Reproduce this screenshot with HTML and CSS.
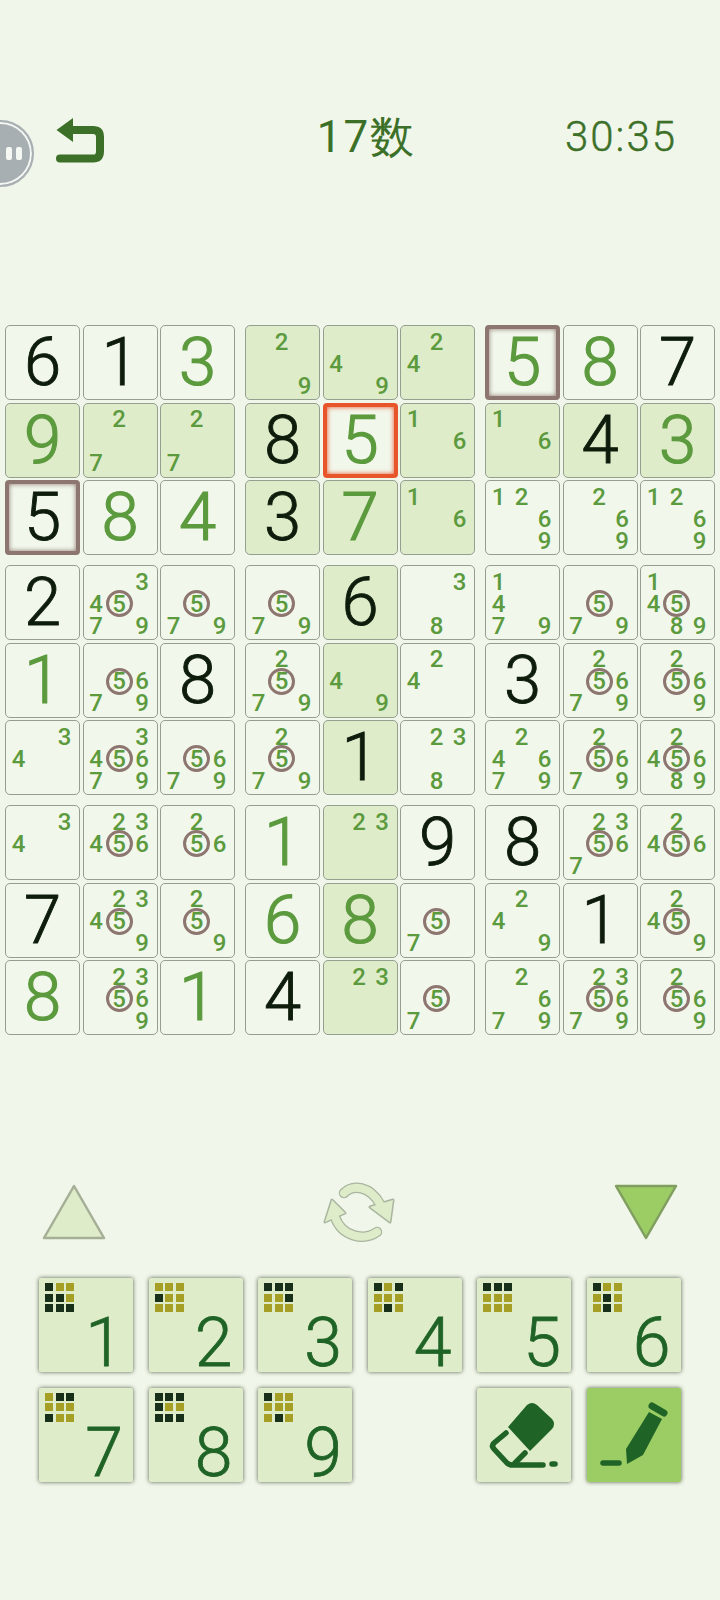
FILE: index.html
```html
<!DOCTYPE html>
<html>
    <head>
        <meta charset="utf-8" />
        <title>17数</title>
        <link rel="stylesheet" href="styles.css">
    </head>

    <body>
        <div class="pause-float"><span></span><span></span></div>

        <header class="top-bar">
            <svg class="back-icon" viewBox="0 0 48 45">
                <polygon points="0.5,12 17,0 17,24" />
                <path d="M14 12 H37 Q44 12 44 19 V33 Q44 40.5 37 40.5 H4" />
            </svg>
            <div class="title">17数</div>
            <div class="timer">30:35</div>
        </header>

        <main class="board">
            <div class="box">
                <div class="cell fix">6</div>
                <div class="cell fix">1</div>
                <div class="cell num">3</div>
                <div class="cell num tint">9</div>
                <div class="cell notes tint"><span class="n2">2</span><span class="n7">7</span></div>
                <div class="cell notes tint"><span class="n2">2</span><span class="n7">7</span></div>
                <div class="cell fix hold">5</div>
                <div class="cell num">8</div>
                <div class="cell num">4</div>
            </div>
            <div class="box">
                <div class="cell notes tint"><span class="n2">2</span><span class="n9">9</span></div>
                <div class="cell notes tint"><span class="n4">4</span><span class="n9">9</span></div>
                <div class="cell notes tint"><span class="n2">2</span><span class="n4">4</span></div>
                <div class="cell fix tint">8</div>
                <div class="cell num sel">5</div>
                <div class="cell notes tint"><span class="n1">1</span><span class="n6">6</span></div>
                <div class="cell fix tint">3</div>
                <div class="cell num tint">7</div>
                <div class="cell notes tint"><span class="n1">1</span><span class="n6">6</span></div>
            </div>
            <div class="box">
                <div class="cell num hold">5</div>
                <div class="cell num">8</div>
                <div class="cell fix">7</div>
                <div class="cell notes tint"><span class="n1">1</span><span class="n6">6</span></div>
                <div class="cell fix tint">4</div>
                <div class="cell num tint">3</div>
                <div class="cell notes"><span class="n1">1</span><span class="n2">2</span><span class="n6">6</span><span class="n9">9</span></div>
                <div class="cell notes"><span class="n2">2</span><span class="n6">6</span><span class="n9">9</span></div>
                <div class="cell notes"><span class="n1">1</span><span class="n2">2</span><span class="n6">6</span><span class="n9">9</span></div>
            </div>

            <div class="box">
                <div class="cell fix">2</div>
                <div class="cell notes"><span class="n3">3</span><span class="n4">4</span><span class="n5 pin">5</span><span class="n7">7</span><span class="n9">9</span></div>
                <div class="cell notes"><span class="n5 pin">5</span><span class="n7">7</span><span class="n9">9</span></div>
                <div class="cell num">1</div>
                <div class="cell notes"><span class="n5 pin">5</span><span class="n6">6</span><span class="n7">7</span><span class="n9">9</span></div>
                <div class="cell fix">8</div>
                <div class="cell notes"><span class="n3">3</span><span class="n4">4</span></div>
                <div class="cell notes"><span class="n3">3</span><span class="n4">4</span><span class="n5 pin">5</span><span class="n6">6</span><span class="n7">7</span><span class="n9">9</span></div>
                <div class="cell notes"><span class="n5 pin">5</span><span class="n6">6</span><span class="n7">7</span><span class="n9">9</span></div>
            </div>
            <div class="box">
                <div class="cell notes"><span class="n5 pin">5</span><span class="n7">7</span><span class="n9">9</span></div>
                <div class="cell fix tint">6</div>
                <div class="cell notes"><span class="n3">3</span><span class="n8">8</span></div>
                <div class="cell notes"><span class="n2">2</span><span class="n5 pin">5</span><span class="n7">7</span><span class="n9">9</span></div>
                <div class="cell notes tint"><span class="n4">4</span><span class="n9">9</span></div>
                <div class="cell notes"><span class="n2">2</span><span class="n4">4</span></div>
                <div class="cell notes"><span class="n2">2</span><span class="n5 pin">5</span><span class="n7">7</span><span class="n9">9</span></div>
                <div class="cell fix tint">1</div>
                <div class="cell notes"><span class="n2">2</span><span class="n3">3</span><span class="n8">8</span></div>
            </div>
            <div class="box">
                <div class="cell notes"><span class="n1">1</span><span class="n4">4</span><span class="n7">7</span><span class="n9">9</span></div>
                <div class="cell notes"><span class="n5 pin">5</span><span class="n7">7</span><span class="n9">9</span></div>
                <div class="cell notes"><span class="n1">1</span><span class="n4">4</span><span class="n5 pin">5</span><span class="n8">8</span><span class="n9">9</span></div>
                <div class="cell fix">3</div>
                <div class="cell notes"><span class="n2">2</span><span class="n5 pin">5</span><span class="n6">6</span><span class="n7">7</span><span class="n9">9</span></div>
                <div class="cell notes"><span class="n2">2</span><span class="n5 pin">5</span><span class="n6">6</span><span class="n9">9</span></div>
                <div class="cell notes"><span class="n2">2</span><span class="n4">4</span><span class="n6">6</span><span class="n7">7</span><span class="n9">9</span></div>
                <div class="cell notes"><span class="n2">2</span><span class="n5 pin">5</span><span class="n6">6</span><span class="n7">7</span><span class="n9">9</span></div>
                <div class="cell notes"><span class="n2">2</span><span class="n4">4</span><span class="n5 pin">5</span><span class="n6">6</span><span class="n8">8</span><span class="n9">9</span></div>
            </div>

            <div class="box">
                <div class="cell notes"><span class="n3">3</span><span class="n4">4</span></div>
                <div class="cell notes"><span class="n2">2</span><span class="n3">3</span><span class="n4">4</span><span class="n5 pin">5</span><span class="n6">6</span></div>
                <div class="cell notes"><span class="n2">2</span><span class="n5 pin">5</span><span class="n6">6</span></div>
                <div class="cell fix">7</div>
                <div class="cell notes"><span class="n2">2</span><span class="n3">3</span><span class="n4">4</span><span class="n5 pin">5</span><span class="n9">9</span></div>
                <div class="cell notes"><span class="n2">2</span><span class="n5 pin">5</span><span class="n9">9</span></div>
                <div class="cell num">8</div>
                <div class="cell notes"><span class="n2">2</span><span class="n3">3</span><span class="n5 pin">5</span><span class="n6">6</span><span class="n9">9</span></div>
                <div class="cell num">1</div>
            </div>
            <div class="box">
                <div class="cell num">1</div>
                <div class="cell notes tint"><span class="n2">2</span><span class="n3">3</span></div>
                <div class="cell fix">9</div>
                <div class="cell num">6</div>
                <div class="cell num tint">8</div>
                <div class="cell notes"><span class="n5 pin">5</span><span class="n7">7</span></div>
                <div class="cell fix">4</div>
                <div class="cell notes tint"><span class="n2">2</span><span class="n3">3</span></div>
                <div class="cell notes"><span class="n5 pin">5</span><span class="n7">7</span></div>
            </div>
            <div class="box">
                <div class="cell fix">8</div>
                <div class="cell notes"><span class="n2">2</span><span class="n3">3</span><span class="n5 pin">5</span><span class="n6">6</span><span class="n7">7</span></div>
                <div class="cell notes"><span class="n2">2</span><span class="n4">4</span><span class="n5 pin">5</span><span class="n6">6</span></div>
                <div class="cell notes"><span class="n2">2</span><span class="n4">4</span><span class="n9">9</span></div>
                <div class="cell fix">1</div>
                <div class="cell notes"><span class="n2">2</span><span class="n4">4</span><span class="n5 pin">5</span><span class="n9">9</span></div>
                <div class="cell notes"><span class="n2">2</span><span class="n6">6</span><span class="n7">7</span><span class="n9">9</span></div>
                <div class="cell notes"><span class="n2">2</span><span class="n3">3</span><span class="n5 pin">5</span><span class="n6">6</span><span class="n7">7</span><span class="n9">9</span></div>
                <div class="cell notes"><span class="n2">2</span><span class="n5 pin">5</span><span class="n6">6</span><span class="n9">9</span></div>
            </div>
        </main>

        <section class="controls">
            <svg class="tri" viewBox="0 0 64 58">
                <polygon class="tri-up" points="32,3 62,55 2,55" />
            </svg>
            <svg class="sync" viewBox="0 0 80 64">
                <g class="sync-back">
                    <path d="M24 13 C33 4 50 6 60 24" />
                    <path d="M15 37 C22 57 44 61 57 52" />
                    <polygon points="73,20 70,42 50,27" />
                    <polygon points="12,20 5,42 25,33" />
                </g>
                <g class="sync-front">
                    <path d="M24 13 C33 4 50 6 60 24" />
                    <path d="M15 37 C22 57 44 61 57 52" />
                    <polygon points="73,20 70,42 50,27" />
                    <polygon points="12,20 5,42 25,33" />
                </g>
            </svg>
            <svg class="tri" viewBox="0 0 64 58">
                <polygon class="tri-down" points="2,3 62,3 32,55" />
            </svg>
        </section>

        <section class="keypad">
            <button class="key">
                <span class="mini"><i class="k"></i><i></i><i></i><i class="k"></i><i class="k"></i><i></i><i class="k"></i><i class="k"></i><i class="k"></i></span>
                <span class="key-num">1</span>
            </button>
            <button class="key">
                <span class="mini"><i></i><i></i><i></i><i class="k"></i><i></i><i></i><i></i><i></i><i></i></span>
                <span class="key-num">2</span>
            </button>
            <button class="key">
                <span class="mini"><i class="k"></i><i class="k"></i><i class="k"></i><i></i><i></i><i class="k"></i><i></i><i></i><i></i></span>
                <span class="key-num">3</span>
            </button>
            <button class="key">
                <span class="mini"><i class="k"></i><i></i><i class="k"></i><i></i><i></i><i></i><i></i><i class="k"></i><i></i></span>
                <span class="key-num">4</span>
            </button>
            <button class="key">
                <span class="mini"><i class="k"></i><i class="k"></i><i class="k"></i><i></i><i></i><i></i><i></i><i></i><i></i></span>
                <span class="key-num">5</span>
            </button>
            <button class="key">
                <span class="mini"><i class="k"></i><i></i><i></i><i></i><i class="k"></i><i></i><i></i><i class="k"></i><i></i></span>
                <span class="key-num">6</span>
            </button>
            <button class="key">
                <span class="mini"><i></i><i class="k"></i><i class="k"></i><i></i><i></i><i></i><i class="k"></i><i></i><i></i></span>
                <span class="key-num">7</span>
            </button>
            <button class="key">
                <span class="mini"><i class="k"></i><i class="k"></i><i class="k"></i><i class="k"></i><i></i><i></i><i class="k"></i><i class="k"></i><i class="k"></i></span>
                <span class="key-num">8</span>
            </button>
            <button class="key">
                <span class="mini"><i class="k"></i><i></i><i></i><i></i><i></i><i></i><i></i><i class="k"></i><i></i></span>
                <span class="key-num">9</span>
            </button>
            <button class="key tool erase">
                <svg viewBox="0 0 94 94">
                    <path class="solid" d="M50 17 Q55 13 60 17 L75 31 Q79 36 75 41 L53 63 L31 39 Z" />
                    <path class="line" d="M29 45 L17 55 Q14 58 17 61 L30 75 Q32 77 36 77 H66" />
                    <path class="line" d="M48 65 L38 75" />
                    <path class="line" d="M75 76 H78" />
                </svg>
            </button>
            <button class="key tool pencil">
                <svg viewBox="0 0 94 94">
                    <path class="solid" d="M62 24 L75 31 L56 67 L40 76 L39 61 Z" />
                    <path class="line cap" d="M65 18 L77 25" />
                    <path class="line" d="M16 75 H32" />
                </svg>
            </button>
        </section>
    </body>
</html>
```

FILE: styles.css
```css
html,
body {
    padding: 0;
    margin: 0;
    --page-color: #f0f6e9;
    --tint-color: #dfecca;
    --note-color: #5c9a3e;
    --dark-green: #1f6426;

    background: var(--page-color);
    font-family: 'Roboto', sans-serif;
}

body {
    width: 720px;
    height: 1600px;
    overflow: hidden;
    position: relative;
}

/* floating pause bubble, cut off by the screen edge */
.pause-float {
    position: absolute;
    left: -33px;
    top: 120px;
    width: 67px;
    height: 67px;
    box-sizing: border-box;
    border-radius: 50%;
    border: 2px solid #a8b0b4;
    background: #a7afb3;
    box-shadow: inset 0 0 0 2px #f4f7f2;
    display: flex;
    align-items: center;
    justify-content: flex-end;
    gap: 4px;
    padding-right: 10px;
}

.pause-float span {
    width: 6px;
    height: 13px;
    border-radius: 2px;
    background: #f4f7f2;
}

.top-bar {
    margin-top: 118px;
    height: 44px;
    padding: 0 43px 0 56px;
    display: grid;
    grid-template-columns: 1fr auto 1fr;
    grid-template-rows: 44px;
    align-items: start;
    color: #3c7028;
}

.back-icon {
    display: block;
    width: 48px;
    height: 45px;
}

.back-icon polygon {
    fill: #3c7028;
}

.back-icon path {
    fill: none;
    stroke: #3c7028;
    stroke-width: 8;
    stroke-linecap: round;
}

.title {
    font-size: 44px;
    line-height: 38px;
    letter-spacing: 2px;
}

.timer {
    font-size: 42px;
    line-height: 38px;
    font-weight: 300;
    -webkit-text-stroke: 0.4px #3c7028;
    letter-spacing: 2px;
    text-align: right;
}

.board {
    margin: 163px 0 0 5px;
    display: grid;
    grid-template-columns: repeat(3, 230px);
    gap: 10px;
}

.box {
    display: grid;
    grid-template-columns: repeat(3, 75px);
    grid-auto-rows: 75px;
    gap: 2.5px;
}

.cell {
    box-sizing: border-box;
    border: 1.5px solid #959f90;
    border-radius: 5px;
    background: #f1f7eb;
    display: flex;
    align-items: center;
    justify-content: center;
    font-size: 67px;
    font-weight: 300;
    line-height: 1;
}

.cell.tint {
    background: var(--tint-color);
}

.fix {
    color: #0e1c0c;
    -webkit-text-stroke: 0.9px #0e1c0c;
}

.num {
    color: var(--note-color);
    -webkit-text-stroke: 1.2px var(--note-color);
}

.hold,
.sel {
    border-radius: 4px;
    border-width: 4px;
}

.hold {
    border-color: #8d7670;
    box-shadow: inset 0 0 5px #8d7670;
}

.sel {
    border-color: #e8552b;
    box-shadow: inset 0 0 5px #e8552b;
}

.notes {
    display: grid;
    grid-template-columns: repeat(3, 23px);
    grid-template-rows: repeat(3, 22px);
    padding: 4.5px 0 0 1px;
    align-content: start;
    justify-content: start;
    font-size: 24px;
    font-weight: 500;
    color: var(--note-color);
}

.notes span {
    display: flex;
    align-items: center;
    justify-content: center;
    line-height: 20px;
}

.n1 { grid-area: 1 / 1; }
.n2 { grid-area: 1 / 2; }
.n3 { grid-area: 1 / 3; }
.n4 { grid-area: 2 / 1; }
.n5 { grid-area: 2 / 2; }
.n6 { grid-area: 2 / 3; }
.n7 { grid-area: 3 / 1; }
.n8 { grid-area: 3 / 2; }
.n9 { grid-area: 3 / 3; }

.notes .pin {
    position: relative;
}

/* ring round a pinned candidate */
.pin::after {
    content: "";
    position: absolute;
    left: 50%;
    top: 50%;
    width: 27px;
    height: 27px;
    box-sizing: border-box;
    margin: -13.5px 0 0 -13.5px;
    border: 3px solid #8d7670;
    border-radius: 50%;
}

.controls {
    margin: 147px 0 0;
    padding: 0 42px;
    height: 60px;
    display: flex;
    align-items: center;
    justify-content: space-between;
}

.tri {
    width: 64px;
    height: 58px;
}

.tri polygon {
    stroke-width: 2.5;
    stroke-linejoin: round;
}

.tri-up {
    fill: var(--tint-color);
    stroke: #a5af96;
}

.tri-down {
    fill: #9ccd65;
    stroke: #7f9e60;
}

.sync {
    width: 80px;
    height: 64px;
}

.sync path {
    fill: none;
    stroke-linecap: round;
}

.sync-back path {
    stroke: #a9b59f;
    stroke-width: 10.5;
}

.sync-back polygon {
    fill: #a9b59f;
    stroke: #a9b59f;
    stroke-width: 3;
    stroke-linejoin: round;
}

.sync-front path {
    stroke: var(--tint-color);
    stroke-width: 8;
}

.sync-front polygon {
    fill: var(--tint-color);
}

.keypad {
    margin: 36px 0 0 39px;
    display: grid;
    grid-template-columns: repeat(6, 94px);
    grid-auto-rows: 94px;
    gap: 15.5px;
}

.key {
    position: relative;
    padding: 0;
    border: 0;
    border-radius: 2px;
    background: var(--tint-color);
    box-shadow: 0 0 4px #555f50;
    font-family: inherit;
}

.mini {
    position: absolute;
    left: 6px;
    top: 5px;
    display: grid;
    grid-template-columns: repeat(3, 8px);
    grid-auto-rows: 8px;
    gap: 2.7px;
}

.mini i {
    background: #a69f26;
}

.mini i.k {
    background: #18301a;
}

.key-num {
    position: absolute;
    right: 10px;
    bottom: -5px;
    font-size: 68px;
    font-weight: 300;
    line-height: 1;
    color: var(--dark-green);
    -webkit-text-stroke: 0.8px var(--dark-green);
}

.tool svg {
    display: block;
    width: 94px;
    height: 94px;
}

.erase {
    grid-column: 5;
}

.pencil {
    background: #9ccd65;
}

.solid {
    fill: var(--dark-green);
}

.line {
    fill: none;
    stroke: var(--dark-green);
    stroke-width: 5.5;
    stroke-linecap: round;
    stroke-linejoin: round;
}

.cap {
    stroke-width: 7;
}
```
